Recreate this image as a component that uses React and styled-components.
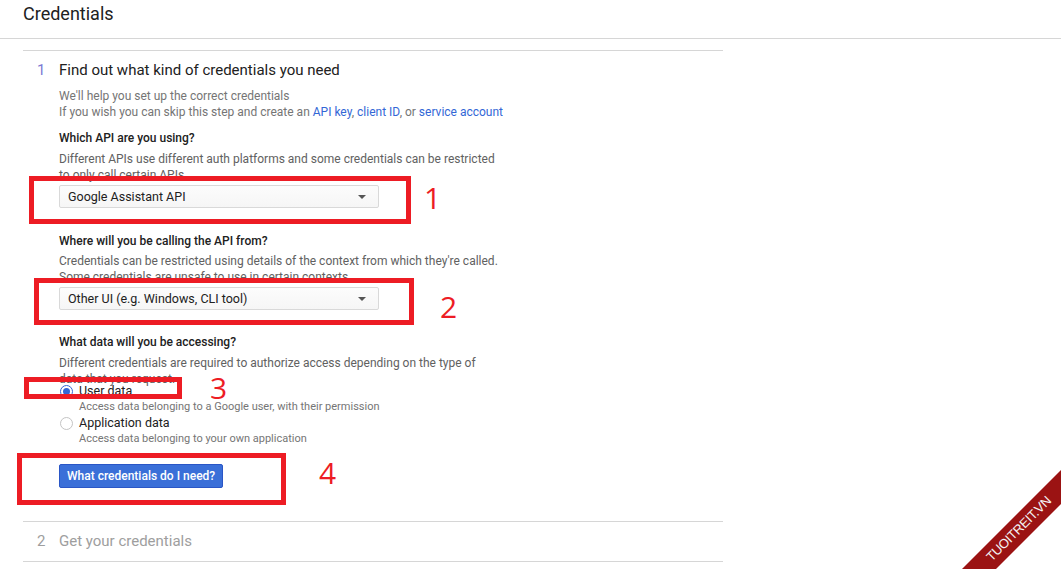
import React from 'react';
import styled, { createGlobalStyle } from 'styled-components';

const GlobalStyle = createGlobalStyle`
  html, body {
    margin: 0;
    padding: 0;
    background: #fff;
  }
  body {
    font-family: Roboto, "Liberation Sans", Arial, sans-serif;
    color: #212121;
  }
`;

const Page = styled.div`
  position: relative;
  width: 1061px;
  height: 569px;
  overflow: hidden;
`;

const Header = styled.div`
  height: 39px;
  box-sizing: border-box;
  border-bottom: 1px solid #d6d6d6;
  padding: 2px 0 0 23px;
  font-size: 18px;
  line-height: 24px;
  color: #212121;
`;

const Card = styled.div`
  width: 700px;
  margin: 11px 0 0 23px;
  border-top: 1px solid #d6d6d6;
`;

const Step = styled.div`
  display: grid;
  grid-template-columns: 36px 1fr;
  padding: ${(p) => p.pad};
  border-bottom: 1px solid #d6d6d6;
`;

const StepNum = styled.div`
  padding-left: 14px;
  font-size: 15px;
  line-height: 20px;
  color: ${(p) => (p.dim ? '#9e9e9e' : '#7b7bd4')};
`;

const StepTitle = styled.div`
  font-size: 15px;
  line-height: 20px;
  color: ${(p) => (p.dim ? '#9e9e9e' : '#212121')};
`;

const Body = styled.div`
  grid-column: 2;
  display: flex;
  flex-direction: column;
  align-items: flex-start;
`;

const Hint = styled.div`
  margin-top: ${(p) => p.mt || 0}px;
  font-size: 12px;
  line-height: 16px;
  color: #757575;
  a {
    color: #3367d6;
    text-decoration: none;
  }
`;

const Label = styled.div`
  margin-top: ${(p) => p.mt}px;
  font-size: 12px;
  line-height: 16px;
  font-weight: 500;
  color: #212121;
`;

const Desc = styled.div`
  margin-top: ${(p) => p.mt || 5}px;
  width: 440px;
  font-size: 12px;
  line-height: 16px;
  color: #616161;
`;

const Select = styled.div`
  margin-top: 2px;
  width: 320px;
  height: 23px;
  box-sizing: border-box;
  display: flex;
  align-items: center;
  justify-content: space-between;
  padding: 0 8px;
  border: 1px solid #d9d9d9;
  border-radius: 2px;
  background: linear-gradient(#fcfcfc, #f6f6f6);
  font-size: 12.5px;
  color: #212121;
`;

const Caret = styled.span`
  width: 0;
  height: 0;
  margin-right: 4px;
  border-left: 4px solid transparent;
  border-right: 4px solid transparent;
  border-top: 4px solid #555;
`;

const RadioGroup = styled.div`
  margin-top: -4px;
  display: flex;
  flex-direction: column;
`;

const RadioRow = styled.div`
  display: grid;
  grid-template-columns: 20px 1fr;
  align-items: center;
`;

const Radio = styled.span`
  width: 13px;
  height: 13px;
  box-sizing: border-box;
  border-radius: 50%;
  border: 1px solid ${(p) => (p.checked ? '#3367d6' : '#c4c4c4')};
  display: flex;
  align-items: center;
  justify-content: center;
  margin-left: 1px;
  &::after {
    content: '';
    width: 7px;
    height: 7px;
    border-radius: 50%;
    background: ${(p) => (p.checked ? '#3367d6' : 'transparent')};
  }
`;

const RadioLabel = styled.span`
  font-size: 12.5px;
  line-height: 16px;
  color: #212121;
`;

const RadioSub = styled.div`
  grid-column: 2;
  font-size: 11px;
  line-height: 16px;
  color: #757575;
`;

const Button = styled.button`
  margin-top: 17px;
  height: 24px;
  padding: 0 7px;
  border: 1px solid #2a56c6;
  border-radius: 2px;
  background: #3a6fd8;
  color: #fff;
  font-family: inherit;
  font-size: 12px;
  font-weight: 500;
  cursor: pointer;
`;

const Mark = styled.div`
  position: absolute;
  left: ${(p) => p.x}px;
  top: ${(p) => p.y}px;
  width: ${(p) => p.w}px;
  height: ${(p) => p.h}px;
  box-sizing: border-box;
  border: 5px solid #ed1c24;
  pointer-events: none;
`;

const MarkNum = styled.div`
  position: absolute;
  left: ${(p) => p.x}px;
  top: ${(p) => p.y}px;
  font-family: "Open Sans", "DejaVu Sans", sans-serif;
  font-weight: 400;
  font-size: 30px;
  line-height: 30px;
  color: #ed1c24;
`;

const Ribbon = styled.div`
  position: absolute;
  right: 0;
  bottom: 0;
  width: 160px;
  height: 130px;
  overflow: hidden;
  pointer-events: none;
`;

const RibbonBand = styled.div`
  position: absolute;
  left: 118px;
  top: 90px;
  width: 260px;
  height: 24px;
  margin: -12px 0 0 -130px;
  transform: rotate(-45deg);
  background: #9b1313;
  color: #f4f4f4;
  font-family: "Liberation Sans", Arial, sans-serif;
  font-size: 13px;
  line-height: 24px;
  text-align: center;
  letter-spacing: -0.3px;
`;

export default function App() {
  return (
    <Page>
      <GlobalStyle />
      <Header>Credentials</Header>
      <Card>
        <Step pad="9px 0 33px 0">
          <StepNum>1</StepNum>
          <StepTitle>Find out what kind of credentials you need</StepTitle>
          <Body>
            <Hint mt={8}>
              We'll help you set up the correct credentials
              <br />
              If you wish you can skip this step and create an <a href="#">API key</a>,{' '}
              <a href="#">client ID</a>, or <a href="#">service account</a>
            </Hint>

            <Label mt={10}>Which API are you using?</Label>
            <Desc>
              Different APIs use different auth platforms and some credentials can be restricted
              to only call certain APIs.
            </Desc>
            <Select>
              Google Assistant API
              <Caret />
            </Select>

            <Label mt={25}>Where will you be calling the API from?</Label>
            <Desc mt={4}>
              Credentials can be restricted using details of the context from which they're called.
              Some credentials are unsafe to use in certain contexts.
            </Desc>
            <Select>
              Other UI (e.g. Windows, CLI tool)
              <Caret />
            </Select>

            <Label mt={24}>What data will you be accessing?</Label>
            <Desc>
              Different credentials are required to authorize access depending on the type of
              data that you request.
            </Desc>
            <RadioGroup>
              <RadioRow>
                <Radio checked />
                <RadioLabel>User data</RadioLabel>
                <RadioSub>Access data belonging to a Google user, with their permission</RadioSub>
              </RadioRow>
              <RadioRow>
                <Radio />
                <RadioLabel>Application data</RadioLabel>
                <RadioSub>Access data belonging to your own application</RadioSub>
              </RadioRow>
            </RadioGroup>
            <Button>What credentials do I need?</Button>
          </Body>
        </Step>
        <Step pad="9px 0 10px 0">
          <StepNum dim>2</StepNum>
          <StepTitle dim>Get your credentials</StepTitle>
        </Step>
      </Card>

      <Mark x={29} y={176} w={382} h={48} />
      <Mark x={34} y={278} w={380} h={47} />
      <Mark x={24} y={377} w={158} h={22} />
      <Mark x={17} y={453} w={269} h={52} />
      <MarkNum x={424} y={183}>1</MarkNum>
      <MarkNum x={440} y={292}>2</MarkNum>
      <MarkNum x={210} y={373}>3</MarkNum>
      <MarkNum x={319} y={458}>4</MarkNum>

      <Ribbon>
        <RibbonBand>TUOITREIT.VN</RibbonBand>
      </Ribbon>
    </Page>
  );
}
